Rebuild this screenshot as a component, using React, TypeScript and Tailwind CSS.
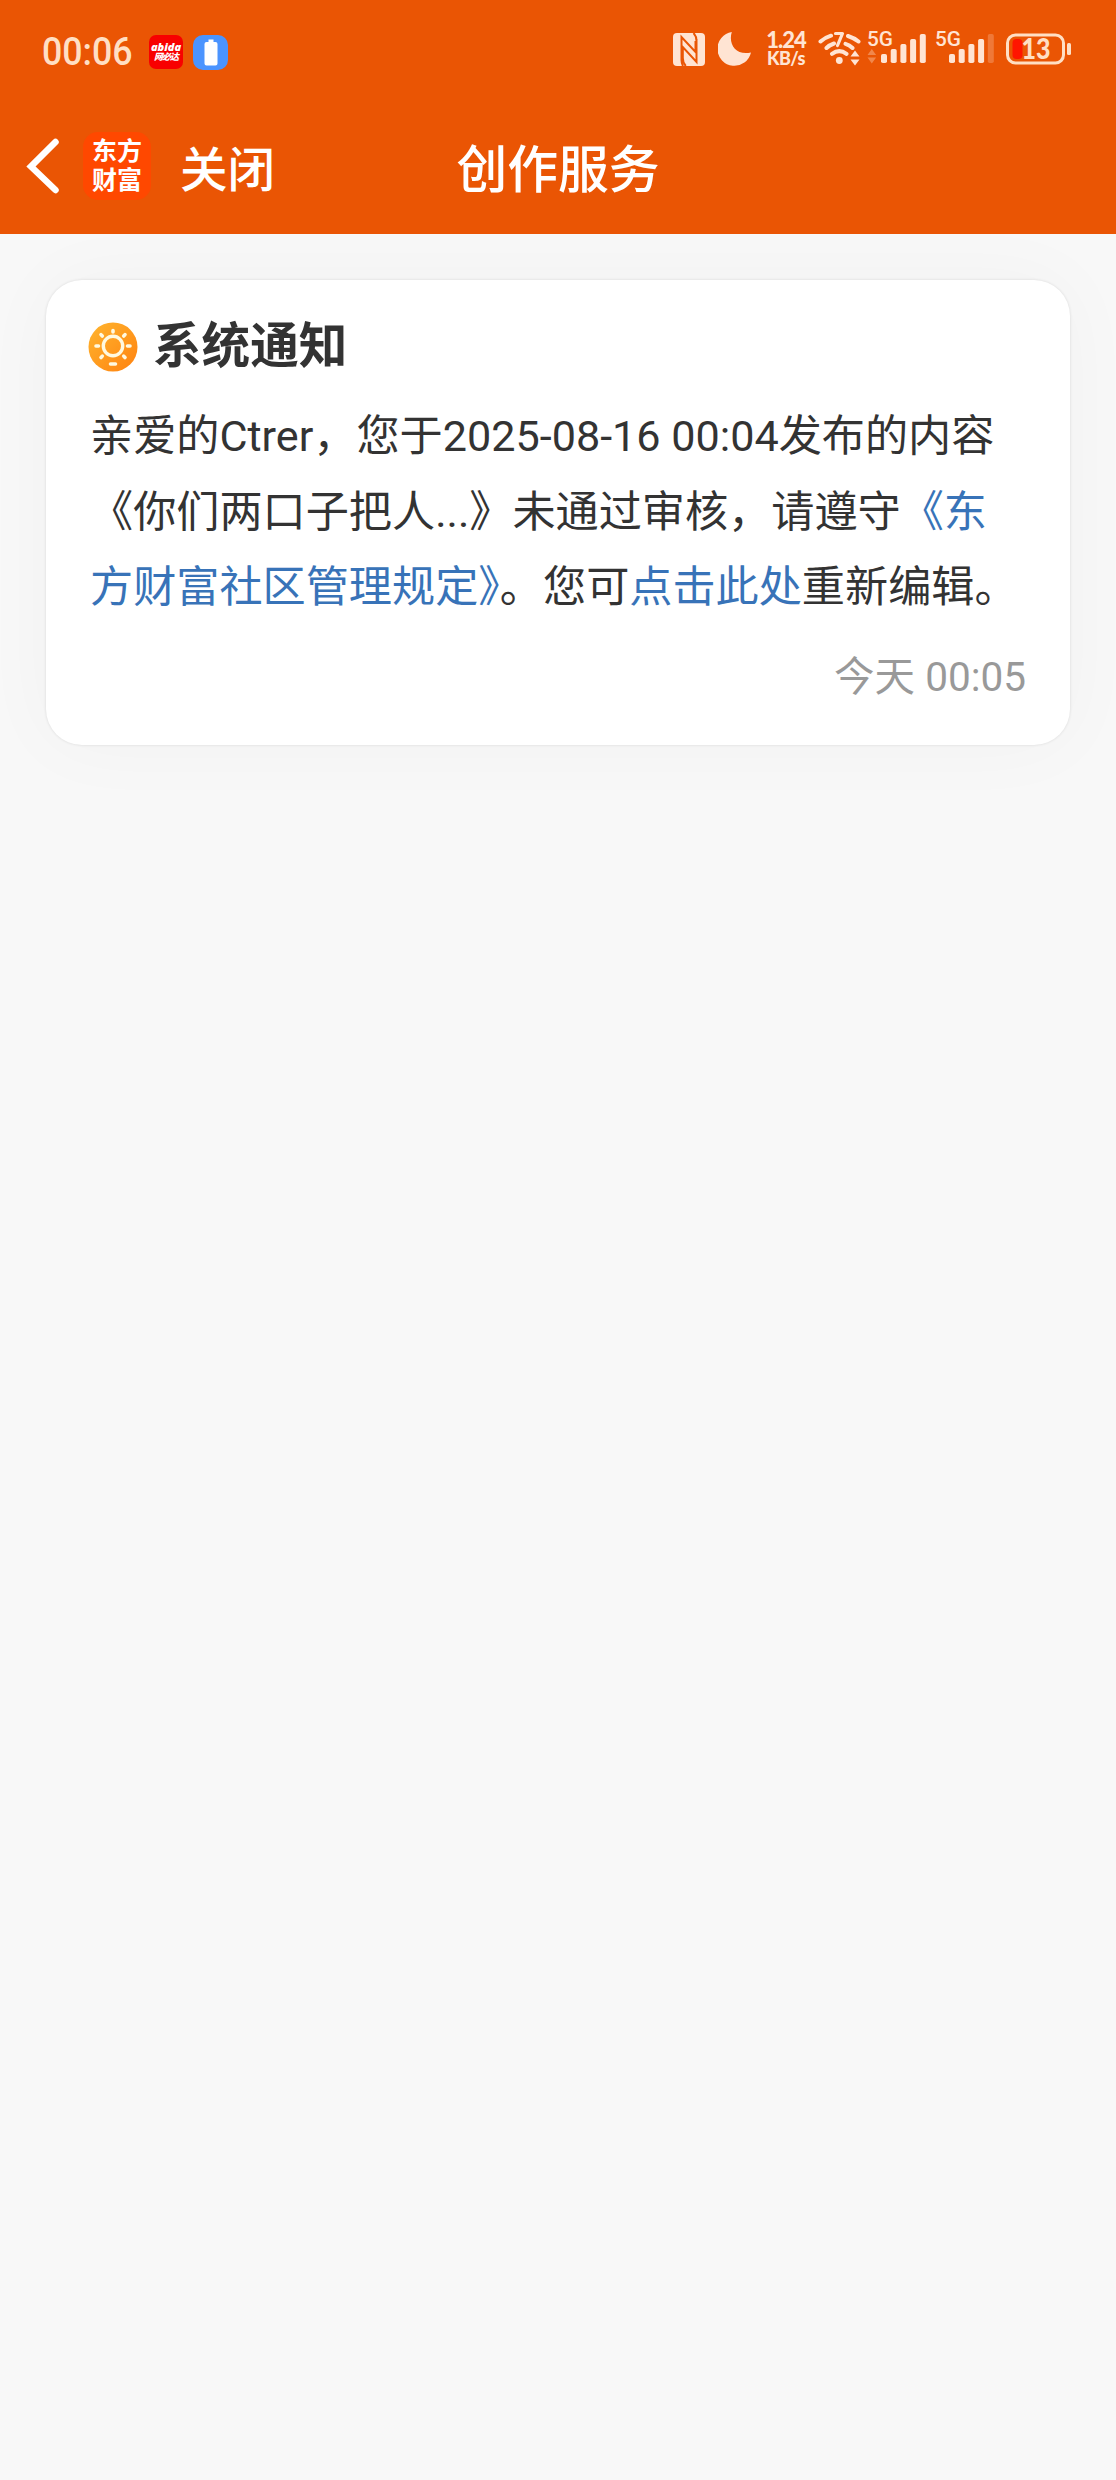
const fontStack = "font-[Roboto,'Noto_Sans_CJK_SC',sans-serif]";

function Signal({ bars }: { bars: number }) {
  return (
    <svg className="overflow-visible" width="62" height="40" viewBox="0 0 62 40" fill="#ffe4d3">
      <text x="0" y="17" fontSize="21" fontFamily="Roboto, sans-serif" fontWeight="500" textLength="26" lengthAdjust="spacingAndGlyphs">
        5G
      </text>
      {[0, 1, 2, 3, 4].map((i) => (
        <rect
          key={i}
          x={14 + i * 9.7}
          y={25 - i * 5}
          width="6"
          height={9 + i * 5}
          rx="1.8"
          opacity={i < bars ? 1 : 0.25}
        />
      ))}
      {bars === 5 && <path d="M0.5 26L4.8 20l4.3 6zM0.5 28.500h8.600L4.800 34.500z" opacity="0.35" />}
    </svg>
  );
}

function StatusBar() {
  return (
    <div className="flex h-[98px] items-center text-[#ffe4d3]">
      <div className="ml-[42px] w-[107px] pt-1.5 text-[38px] leading-none font-medium text-[#ffdfc4]">
        <span className="inline-block origin-left scale-x-[0.94]">00:06</span>
      </div>
      <div className="mt-1.5 flex h-[34px] w-[34px] flex-col items-center justify-center rounded-[7px] bg-[#f80000] text-white">
        <span className="font-['Open_Sans',sans-serif] text-[11px] leading-[10px] font-extrabold italic">abida</span>
        <span className="text-[9px] leading-[10px] font-black italic tracking-[-1px]">网必达</span>
      </div>
      <div className="mt-1.5 ml-[10px] flex h-[35px] w-[35px] items-center justify-center rounded-[10px] bg-[#4b94ff]">
        <svg width="14" height="27" viewBox="0 0 14 27" fill="#fff">
          <path d="M4.500 0.500h5v2.500h2a2 2 0 0 1 2 2v19.500a2 2 0 0 1-2 2h-9a2 2 0 0 1-2-2V5a2 2 0 0 1 2-2h2z" />
        </svg>
      </div>

      {/* nfc */}
      <svg className="ml-[445px]" width="32" height="33" viewBox="0 0 32 33">
        <rect width="32" height="33" rx="4" fill="#ffe4d3" />
        <path
          d="M8.500 27V4L22.500 19V8M23.500 6v23L9.800 14V25q0 5 3 8M23.500 8q0-5-3-8M8.500 27q0 3 1.500 6"
          fill="none"
          stroke="#ea5504"
          strokeWidth="2"
        />
      </svg>
      {/* moon */}
      <svg className="ml-[13px]" width="34" height="34" viewBox="0 0 34 34" fill="#ffe4d3">
        <path d="M13.800 0C10 12 18 24 33 20.500A17 17 0 1 1 13.800 0z" />
      </svg>
      <div className="ml-[13px] flex w-[42px] flex-col items-center font-[Lato,sans-serif] font-black">
        <span className="text-[22px] leading-[18px] tracking-[-1px]">1.24</span>
        <span className="text-[18px] leading-[18px] tracking-[-0.5px]">KB/s</span>
      </div>
      {/* wifi 7 */}
      <svg className="ml-[11px]" width="44" height="36" viewBox="0 0 44 36" fill="none" stroke="#ffe4d3" strokeWidth="4" strokeLinecap="round">
        <path d="M2.500 10.500Q7 6.600 13 4.700M30 5Q36 7 40.500 10.500M8.500 17Q11.500 14 16 12.500M27.500 12.800Q31.500 14 34.500 17M14 22.800Q21.300 17.500 28.500 22.800" />
        <path d="M17.500 2.500H24.500L19.500 14.500" strokeWidth="3.200" strokeLinejoin="round" />
        <circle cx="21.300" cy="29.500" r="3.400" fill="#ffe4d3" stroke="none" />
        <path d="M32.500 25.500L37 19.500l4.500 6zM32.500 28.500h9L37 34.500z" fill="#ffe4d3" stroke="none" />
      </svg>
      <div className="ml-[5px] flex gap-[6px]">
        <Signal bars={5} />
        <Signal bars={4} />
      </div>
      {/* battery */}
      <svg className="ml-[9px]" width="66" height="34" viewBox="0 0 66 34">
        <rect x="1.500" y="3" width="56" height="28" rx="8" fill="none" stroke="#ffdfc4" strokeWidth="3" />
        <rect x="6.500" y="7" width="10" height="20" rx="4" fill="#ff1500" />
        <rect x="61" y="11" width="4" height="12" rx="1.500" fill="#ffdfc4" />
        <text x="15.500" y="27" fontSize="28" fontWeight="900" fontFamily="Lato, sans-serif" fill="#ffdfc4" textLength="29" lengthAdjust="spacingAndGlyphs">
          13
        </text>
      </svg>
    </div>
  );
}

function NavBar() {
  return (
    <div className="grid h-[136px] grid-cols-[1fr_auto_1fr] items-center text-white">
      <div className="flex items-center">
        <svg className="ml-[26px]" width="34" height="56" viewBox="0 0 34 56" fill="none" stroke="#fff" strokeWidth="6.500" strokeLinecap="round">
          <path d="M29.500 4L5 28.500L29.500 52" />
        </svg>
        <div className="ml-[23px] grid h-[68px] w-[68px] place-content-center rounded-[15px] bg-[#ff4800] text-center text-[25px] leading-[29px] font-bold">
          <span>东方</span>
          <span>财富</span>
        </div>
        <span className="ml-[29px] pt-3 text-[47.500px] leading-none font-medium">关闭</span>
      </div>
      <h1 className="pt-2.5 text-[50.800px] leading-none font-medium">创作服务</h1>
      <div />
    </div>
  );
}

function SunIcon() {
  return (
    <svg width="50" height="50" viewBox="0 0 50 50" fill="none" stroke="#fff9e0" strokeWidth="3.600" strokeLinecap="round">
      <defs>
        <linearGradient id="sun" x1="0" y1="0" x2="1" y2="1">
          <stop offset="0" stopColor="#ffb52e" />
          <stop offset="1" stopColor="#ff8210" />
        </linearGradient>
      </defs>
      <circle cx="25" cy="25" r="24.500" fill="url(#sun)" stroke="none" />
      <circle cx="25" cy="24" r="9.700" strokeWidth="3.400" />
      <path d="M25 8.500v1.500M13 12.600l1.300 1.400M37 12.600l-1.300 1.400M8 24h2.500M39.500 24h2.500M13 35.500l1.300-1.400M37 35.500l-1.300-1.400M22.500 42h5" />
    </svg>
  );
}

function NoticeCard() {
  return (
    <section className="mx-[46px] mt-[46px] h-[465px] rounded-[36px] bg-white px-[44px] pt-[37px] text-[#333] shadow-[0_0_80px_rgba(0,0,0,0.03),0_0_3px_rgba(0,0,0,0.12)]">
      <div className="-ml-[2px] flex h-[60px] items-center">
        <SunIcon />
        <h2 className="ml-[15px] text-[48.600px] leading-none font-bold">系统通知</h2>
      </div>
      <p className="mt-[22px] text-[43.150px] leading-[75.500px] whitespace-nowrap">
        亲爱的Ctrer，您于2025-08-16 00:04发布的内容
        <br />
        《你们两口子把人...》未通过审核，请遵守<a className="text-[#3873b8]">《东</a>
        <br />
        <a className="text-[#3873b8]">方财富社区管理规定》</a>。您可<a className="text-[#3873b8]">点击此处</a>重新编辑。
      </p>
      <div className="mt-[21px] text-right text-[40.500px] leading-[60px] text-[#999]">今天 00:05</div>
    </section>
  );
}

export default function App() {
  return (
    <div className={`flex min-h-[2480px] w-[1116px] flex-col bg-[#f8f8f8] ${fontStack}`} lang="zh-CN">
      <header className="bg-[#ea5504]">
        <StatusBar />
        <NavBar />
      </header>
      <NoticeCard />
    </div>
  );
}
